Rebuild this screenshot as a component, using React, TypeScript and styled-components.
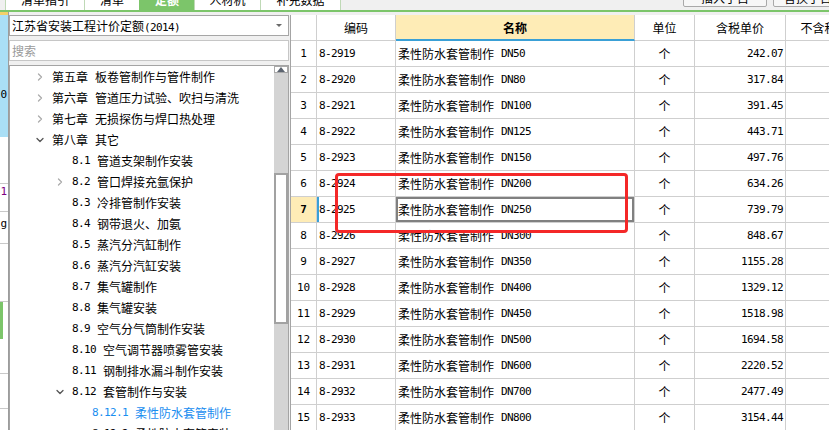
import React from 'react';
import styled, { createGlobalStyle } from 'styled-components';
import { ChevronRight, ChevronDown } from 'lucide-react';

const GlobalStyle = createGlobalStyle`
  html, body {
    margin: 0;
    padding: 0;
    background: #f0f0f0;
  }
  body {
    font-family: "Noto Sans CJK SC", "Noto Sans", sans-serif;
    font-size: 12px;
    color: #000;
  }
`;

interface TreeNode {
  level: number;
  num: string;
  title: string;
  arrow?: 'right' | 'down';
  active?: boolean;
}

const treeNodes: TreeNode[] = [
  { level: 0, num: '第五章', title: '板卷管制作与管件制作', arrow: 'right' },
  { level: 0, num: '第六章', title: '管道压力试验、吹扫与清洗', arrow: 'right' },
  { level: 0, num: '第七章', title: '无损探伤与焊口热处理', arrow: 'right' },
  { level: 0, num: '第八章', title: '其它', arrow: 'down' },
  { level: 1, num: '8.1', title: '管道支架制作安装' },
  { level: 1, num: '8.2', title: '管口焊接充氩保护', arrow: 'right' },
  { level: 1, num: '8.3', title: '冷排管制作安装' },
  { level: 1, num: '8.4', title: '钢带退火、加氨' },
  { level: 1, num: '8.5', title: '蒸汽分汽缸制作' },
  { level: 1, num: '8.6', title: '蒸汽分汽缸安装' },
  { level: 1, num: '8.7', title: '集气罐制作' },
  { level: 1, num: '8.8', title: '集气罐安装' },
  { level: 1, num: '8.9', title: '空气分气筒制作安装' },
  { level: 1, num: '8.10', title: '空气调节器喷雾管安装' },
  { level: 1, num: '8.11', title: '钢制排水漏斗制作安装' },
  { level: 1, num: '8.12', title: '套管制作与安装', arrow: 'down' },
  { level: 2, num: '8.12.1', title: '柔性防水套管制作', active: true },
  { level: 2, num: '8.12.2', title: '柔性防水套管安装' },
];

const sizes = [50, 80, 100, 125, 150, 200, 250, 300, 350, 400, 450, 500, 600, 700, 800];
const prices = [
  '242.07', '317.84', '391.45', '443.71', '497.76', '634.26', '739.79', '848.67',
  '1155.28', '1329.12', '1518.98', '1694.58', '2220.52', '2477.49', '3154.44',
];

const rows = sizes.map((dn, i) => ({
  no: i + 1,
  code: `8-${2919 + i}`,
  dn: `DN${dn}`,
  price: prices[i],
}));

const tabs = [
  { label: '清单指引', width: 80 },
  { label: '清单', width: 56 },
  { label: '定额', width: 56, active: true },
  { label: '人材机', width: 67 },
  { label: '补充数据', width: 81 },
];

const App: React.FC = () => {
  return (
    <Page>
      <GlobalStyle />
      <TopBar>
        <Tabs>
          {tabs.map((t) => (
            <Tab key={t.label} $width={t.width} $active={!!t.active}>
              {t.label}
            </Tab>
          ))}
        </Tabs>
        <TopButtons>
          <TopButton $width={84}>插入子目</TopButton>
          <TopButton $width={70}>替换子目</TopButton>
        </TopButtons>
      </TopBar>

      <Main>
        <Strip>
          <StripBlock $h={3} $bg="#f3d06a" />
          <StripBlock $h={122} $bg="#aadff6">
            <StripText $top={74}>0</StripText>
          </StripBlock>
          <StripBlock $h={47} $bg="#ffffff" $line />
          <StripBlock $h={28} $bg="#ffffff" $line>
            <StripText $top={2} $color="#800080">1</StripText>
          </StripBlock>
          <StripBlock $h={32} $bg="#ffffff" $line>
            <StripText $top={6}>g</StripText>
          </StripBlock>
          <StripBlock $h={58} $bg="#ffffff" $line />
          <StripBlock $h={37} $bg="#ffffff" $mark />
          <StripBlock $h={35} $bg="#ffffff" $line />
          <StripBlock $h={35} $bg="#ffffff" $line />
          <StripBlock $h={40} $bg="#ffffff" $line />
        </Strip>

        <LeftPanel>
          <Combo>
            <span>
              江苏省安装工程计价定额<Mono>(2014)</Mono>
            </span>
            <ComboArrow />
          </Combo>
          <Search placeholder="搜索" />
          <Tree>
            <TreeList>
              {treeNodes.map((n) => (
                <TreeRow key={n.num} $level={n.level} $active={!!n.active}>
                  <ArrowSlot $dark={n.arrow === 'down'}>
                    {n.arrow === 'right' && <ChevronRight size={12} strokeWidth={2.6} />}
                    {n.arrow === 'down' && <ChevronDown size={12} strokeWidth={2.6} />}
                  </ArrowSlot>
                  {n.level === 0 ? <span>{n.num}</span> : <Mono>{n.num}</Mono>}
                  <TreeTitle>{n.title}</TreeTitle>
                </TreeRow>
              ))}
            </TreeList>
            <ScrollBar>
              <ScrollUp />
              <ScrollTrack $h={100} />
              <ScrollThumb />
              <ScrollTrack $h={120} />
            </ScrollBar>
          </Tree>
        </LeftPanel>

        <GridWrap>
          <Grid>
            <HeadCell />
            <HeadCell>编码</HeadCell>
            <HeadCell $highlight>名称</HeadCell>
            <HeadCell>单位</HeadCell>
            <HeadCell>含税单价</HeadCell>
            <HeadCell>不含税单价</HeadCell>
            {rows.map((r) => {
              const current = r.no === 7;
              return (
                <React.Fragment key={r.no}>
                  <NoCell $current={current}>{r.no}</NoCell>
                  <Cell $marker={current}>
                    <Mono>{r.code}</Mono>
                  </Cell>
                  <Cell $selected={current}>
                    柔性防水套管制作<DnText>{r.dn}</DnText>
                  </Cell>
                  <Cell $align="center">个</Cell>
                  <Cell $align="flex-end">
                    <Mono>{r.price}</Mono>
                  </Cell>
                  <Cell />
                </React.Fragment>
              );
            })}
          </Grid>
        </GridWrap>
      </Main>

      <Annotation />
    </Page>
  );
};

export default App;

const Page = styled.div`
  position: relative;
  width: 829px;
  height: 430px;
  overflow: hidden;
  display: flex;
  flex-direction: column;
  background: #f0f0f0;
`;

const TopBar = styled.div`
  height: 10px;
  flex-shrink: 0;
  display: flex;
  align-items: flex-end;
  overflow: hidden;
  padding-left: 5px;
  border-bottom: 2px solid #7cc56a;
`;

const Tabs = styled.div`
  display: flex;
  align-items: flex-end;
`;

const Tab = styled.div<{ $width: number; $active: boolean }>`
  width: ${(p) => p.$width}px;
  height: 23px;
  flex-shrink: 0;
  box-sizing: border-box;
  margin-right: -1px;
  border: 1px solid ${(p) => (p.$active ? '#7cc56a' : '#bfd9b6')};
  border-bottom: none;
  background: ${(p) => (p.$active ? '#7cc56a' : '#ffffff')};
  color: ${(p) => (p.$active ? '#ffffff' : '#000000')};
  font-weight: ${(p) => (p.$active ? 'bold' : 'normal')};
  display: flex;
  align-items: center;
  justify-content: center;
  font-size: 12px;
`;

const TopButtons = styled.div`
  margin-left: auto;
  display: flex;
  gap: 6px;
  align-self: flex-start;
  margin-top: -13px;
  margin-right: -14px;
`;

const TopButton = styled.div<{ $width: number }>`
  width: ${(p) => p.$width}px;
  height: 20px;
  box-sizing: border-box;
  border: 1px solid #a9a9a9;
  border-radius: 2px;
  background: #f7f7f7;
  display: flex;
  align-items: center;
  justify-content: center;
  font-size: 12px;
`;

const Main = styled.div`
  flex: 1;
  min-height: 0;
  display: flex;
`;

const Strip = styled.div`
  width: 8px;
  flex-shrink: 0;
  border-right: 1px solid #9c9c9c;
  display: flex;
  flex-direction: column;
  overflow: hidden;
  background: #ffffff;
`;

const StripBlock = styled.div<{ $h: number; $bg: string; $line?: boolean; $mark?: boolean }>`
  position: relative;
  height: ${(p) => p.$h}px;
  flex-shrink: 0;
  box-sizing: border-box;
  background: ${(p) => p.$bg};
  border-bottom: ${(p) => (p.$line ? '1px solid #c9c9c9' : 'none')};
  border-left: ${(p) => (p.$mark ? '3px solid #7cc56a' : 'none')};
`;

const StripText = styled.span<{ $top: number; $color?: string }>`
  position: absolute;
  right: 1px;
  top: ${(p) => p.$top}px;
  font-family: "DejaVu Sans Mono", monospace;
  font-size: 11px;
  line-height: 12px;
  color: ${(p) => p.$color || '#000'};
`;

const LeftPanel = styled.div`
  width: 281px;
  flex-shrink: 0;
  padding-top: 3px;
  display: flex;
  flex-direction: column;
  box-sizing: border-box;
`;

const Mono = styled.span`
  font-family: "DejaVu Sans Mono", "Liberation Mono", monospace;
  font-size: 11px;
  letter-spacing: -0.62px;
`;

const DnText = styled(Mono)`
  margin-left: 7px;
`;

const Combo = styled.div`
  width: 280px;
  height: 21px;
  box-sizing: border-box;
  border: 1px solid #a6a6a6;
  background: #ffffff;
  display: flex;
  align-items: center;
  justify-content: space-between;
  padding: 0 6px 0 2px;
  white-space: nowrap;
`;

const ComboArrow = styled.span`
  width: 0;
  height: 0;
  border-left: 3px solid transparent;
  border-right: 3px solid transparent;
  border-top: 3px solid #6a6a6a;
`;

const Search = styled.input`
  width: 280px;
  height: 21px;
  margin: 4px 0 0;
  box-sizing: border-box;
  border: 1px solid #c6c6c6;
  background: #ffffff;
  padding: 0 2px;
  font-family: "Noto Sans CJK SC", sans-serif;
  font-size: 12px;
  outline: none;

  &::placeholder {
    color: #9a9a9a;
  }
`;

const Tree = styled.div`
  width: 280px;
  flex: 1;
  min-height: 0;
  margin-top: 4px;
  box-sizing: border-box;
  border: 1px solid #a4a4a4;
  border-bottom: none;
  background: #ffffff;
  display: flex;
  overflow: hidden;
`;

const TreeList = styled.div`
  flex: 1;
  min-width: 0;
  display: flex;
  flex-direction: column;
`;

const TreeRow = styled.div<{ $level: number; $active: boolean }>`
  height: 21px;
  flex-shrink: 0;
  display: flex;
  align-items: center;
  padding-left: ${(p) => 23 + p.$level * 20}px;
  color: ${(p) => (p.$active ? '#1a8ef0' : '#000000')};
  white-space: nowrap;
`;

const ArrowSlot = styled.span<{ $dark: boolean }>`
  width: 14px;
  margin-right: 5px;
  display: flex;
  align-items: center;
  justify-content: center;
  color: ${(p) => (p.$dark ? '#555555' : '#ababab')};
`;

const TreeTitle = styled.span`
  margin-left: 7px;
`;

const ScrollBar = styled.div`
  width: 14px;
  flex-shrink: 0;
  display: flex;
  flex-direction: column;
  background: #d4d4d4;
`;

const ScrollUp = styled.div`
  height: 15px;
  box-sizing: border-box;
  border: 1px solid #a8a8a8;
  background: #ffffff;
  display: flex;
  align-items: center;
  justify-content: center;

  &::after {
    content: '';
    width: 0;
    height: 0;
    border-left: 4px solid transparent;
    border-right: 4px solid transparent;
    border-bottom: 5px solid #5c6470;
  }
`;

const ScrollTrack = styled.div<{ $h: number }>`
  height: ${(p) => p.$h}px;
  flex-shrink: 0;
  background: #d4d4d4;
`;

const ScrollThumb = styled.div`
  height: 151px;
  flex-shrink: 0;
  box-sizing: border-box;
  border: 2px solid #a2a2a2;
  background: #ffffff;
`;

const GridWrap = styled.div`
  flex: 1;
  min-width: 0;
  margin-top: 3px;
  border-left: 1px solid #a4a4a4;
  background: #ffffff;
  overflow: hidden;
`;

const Grid = styled.div`
  display: grid;
  grid-template-columns: 26px 79px 239px 60px 91px 90px;
  grid-auto-rows: 26px;
  width: max-content;
`;

const BaseCell = styled.div`
  box-sizing: border-box;
  border-right: 1px solid #cfcfcf;
  border-bottom: 1px solid #cfcfcf;
  display: flex;
  align-items: center;
  white-space: nowrap;
  overflow: hidden;
`;

const HeadCell = styled(BaseCell)<{ $highlight?: boolean }>`
  justify-content: center;
  background: ${(p) => (p.$highlight ? '#feecb6' : '#ffffff')};
  font-weight: ${(p) => (p.$highlight ? 'bold' : 'normal')};
  border-bottom: ${(p) => (p.$highlight ? '2px solid #3aa0d6' : '1px solid #cfcfcf')};
`;

const NoCell = styled(BaseCell)<{ $current: boolean }>`
  justify-content: center;
  font-family: "DejaVu Sans Mono", monospace;
  font-size: 11px;
  background: ${(p) => (p.$current ? '#feecb6' : '#ffffff')};
  font-weight: ${(p) => (p.$current ? 'bold' : 'normal')};
`;

const Cell = styled(BaseCell)<{ $align?: string; $marker?: boolean; $selected?: boolean }>`
  justify-content: ${(p) => p.$align || 'flex-start'};
  padding: 0 2px;
  box-shadow: ${(p) =>
    p.$marker ? 'inset 2px 0 0 #3aa0d6' : p.$selected ? 'inset 0 0 0 2px #808080' : 'none'};
`;

const Annotation = styled.div`
  position: absolute;
  left: 335px;
  top: 173px;
  width: 293px;
  height: 60px;
  box-sizing: border-box;
  border: 3px solid #f42828;
  border-radius: 4px;
  pointer-events: none;
`;
